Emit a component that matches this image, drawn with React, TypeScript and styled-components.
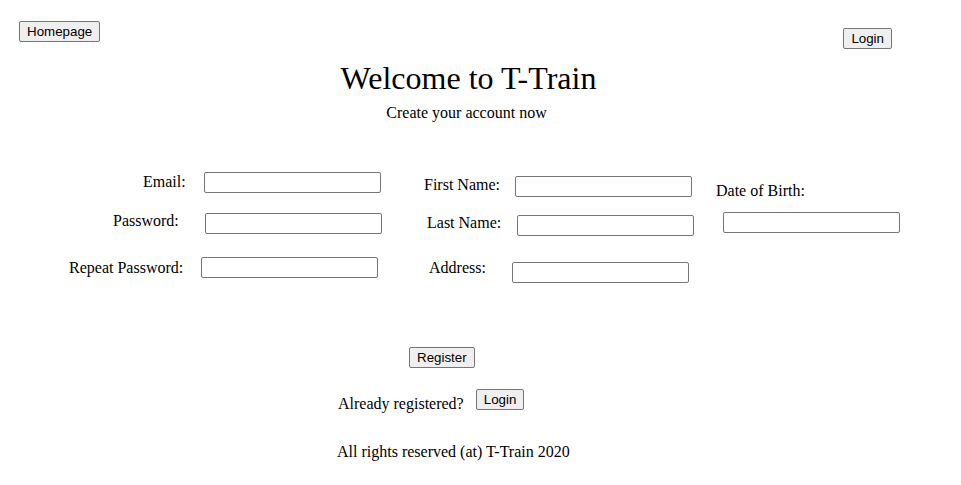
import React from 'react';
import styled, { createGlobalStyle } from 'styled-components';

const GlobalStyle = createGlobalStyle`
  body {
    margin: 0;
    background: #fff;
    color: #000;
    font-family: "Liberation Serif", "Times New Roman", serif;
    font-size: 16px;
  }
`;

const Page = styled.div`
  width: 961px;
  min-height: 485px;
`;

const Button = styled.button<{ $mt?: number; $ml?: number }>`
  appearance: none;
  box-sizing: border-box;
  height: 21px;
  margin: ${(p) => p.$mt ?? 0}px 0 0 ${(p) => p.$ml ?? 0}px;
  padding: 1px 7px;
  border: 1px solid #767676;
  border-radius: 2px;
  background: #efefef;
  color: #000;
  font-family: "Liberation Sans", Arial, sans-serif;
  font-size: 13.333px;
  line-height: 15px;
  cursor: pointer;
`;

const TopBar = styled.div`
  display: flex;
  justify-content: space-between;
  align-items: flex-start;
  padding: 21px 69px 0 19px;
`;

const Header = styled.header`
  padding-right: 24px;
  text-align: center;
`;

const Title = styled.h1`
  margin: 11px 0 0;
  font-size: 32px;
  font-weight: normal;
  line-height: 37px;
`;

const Subtitle = styled.p`
  margin: 7px 0 0;
  padding-right: 4px;
  line-height: 18px;
`;

const Form = styled.form`
  display: flex;
  align-items: flex-start;
  margin-top: 50px;
`;

const Column = styled.div<{ $width: number; $top: number }>`
  display: flex;
  flex-direction: column;
  align-items: flex-start;
  width: ${(p) => p.$width}px;
  padding-top: ${(p) => p.$top}px;
  flex-shrink: 0;
`;

const Field = styled.div<{ $mt?: number; $ml: number }>`
  display: flex;
  align-items: flex-start;
  margin: ${(p) => p.$mt ?? 0}px 0 0 ${(p) => p.$ml}px;
`;

const Label = styled.label<{ $dy?: number; $gap?: number }>`
  display: block;
  margin: ${(p) => p.$dy ?? 0}px ${(p) => p.$gap ?? 0}px 0 0;
  line-height: 18px;
  white-space: nowrap;
`;

const Input = styled.input<{ $mt?: number; $ml?: number }>`
  box-sizing: border-box;
  width: 177px;
  height: 21px;
  margin: ${(p) => p.$mt ?? 0}px 0 0 ${(p) => p.$ml ?? 0}px;
  padding: 1px 2px;
  border: 1px solid #767676;
  border-radius: 2px;
  background: #fff;
  font-family: "Liberation Sans", Arial, sans-serif;
  font-size: 13.333px;
`;

const Bottom = styled.div`
  display: flex;
  flex-direction: column;
  align-items: flex-start;
  padding-left: 337px;
`;

const LoginRow = styled.div`
  display: flex;
  align-items: flex-start;
  margin: 21px 0 0 1px;
`;

const Text = styled.span<{ $mt?: number }>`
  display: block;
  margin-top: ${(p) => p.$mt ?? 0}px;
  line-height: 18px;
`;

const Footer = styled.footer`
  margin-top: 30px;
  line-height: 18px;
`;

export default function App() {
  return (
    <Page>
      <GlobalStyle />
      <TopBar>
        <Button>Homepage</Button>
        <Button $mt={7}>Login</Button>
      </TopBar>
      <Header>
        <Title>Welcome to T-Train</Title>
        <Subtitle>Create your account now</Subtitle>
      </Header>
      <Form onSubmit={(e) => e.preventDefault()}>
        <Column $width={400} $top={0}>
          <Field $ml={143}>
            <Label $dy={1} $gap={18}>Email:</Label>
            <Input type="email" />
          </Field>
          <Field $ml={113} $mt={20}>
            <Label $dy={-1} $gap={26}>Password:</Label>
            <Input type="password" />
          </Field>
          <Field $ml={69} $mt={23}>
            <Label $dy={2} $gap={18}>Repeat Password:</Label>
            <Input type="password" />
          </Field>
        </Column>
        <Column $width={300} $top={4}>
          <Field $ml={24}>
            <Label $dy={0} $gap={15}>First Name:</Label>
            <Input type="text" />
          </Field>
          <Field $ml={27} $mt={18}>
            <Label $dy={-1} $gap={16}>Last Name:</Label>
            <Input type="text" />
          </Field>
          <Field $ml={29} $mt={26}>
            <Label $dy={-3} $gap={26}>Address:</Label>
            <Input type="text" />
          </Field>
        </Column>
        <Column $width={261} $top={10}>
          <Field $ml={16}>
            <Label>Date of Birth:</Label>
          </Field>
          <Input type="text" $ml={23} $mt={12} />
        </Column>
      </Form>
      <Bottom>
        <Button type="submit" $mt={64} $ml={72}>Register</Button>
        <LoginRow>
          <Text $mt={6}>Already registered?</Text>
          <Button $ml={12}>Login</Button>
        </LoginRow>
        <Footer>All rights reserved (at) T-Train 2020</Footer>
      </Bottom>
    </Page>
  );
}
